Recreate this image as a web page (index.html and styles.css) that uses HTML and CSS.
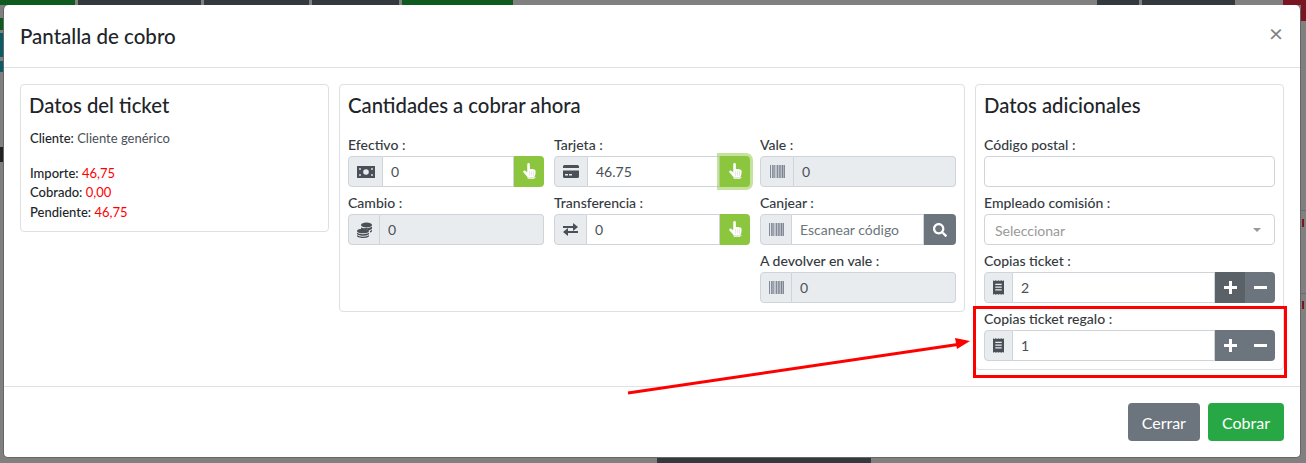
FILE: index.html
```html
<!DOCTYPE html>
<html lang="es">
<head>
<meta charset="utf-8">
<title>Pantalla de cobro</title>
<link rel="stylesheet" href="styles.css">
</head>
<body>
<svg class="defs" width="0" height="0" aria-hidden="true">
  <symbol id="i-hand" viewBox="0 0 16 19">
    <path fill="#fff" d="M5.6 1.4c0-.8.6-1.4 1.4-1.4s1.4.6 1.4 1.4v5.2c.5-.4 1.4-.4 1.9 0 .5-.3 1.4-.3 1.8.2.7-.2 1.9.1 2.2 1.1.3 1 .2 3-.1 4.4-.2 1-.7 1.700-.9 2.500v2H6v-1.800c-.8-1.200-3-3.400-4.300-4.700-.8-.9-.3-2.300.9-2.300.9 0 2.300 1.200 3 1.900z"/>
    <path fill="#d9dcd2" d="M7.700 8.600h.7v4.800h-.7zM9.800 8.600h.7v4.800h-.7zM11.900 8.600h.7v4.800h-.7zM6 15.200h9v.6H6z"/>
  </symbol>
  <symbol id="i-barcode" viewBox="0 0 16 14">
    <path fill="#7b8391" d="M0 0h1v14H0zM2 0h1v14H2zM3.500 0h1.500v14H3.500zM6 0h.8v14H6zM7.500 0h1v14h-1zM9.200 0h1.300v14H9.200zM11 0h.8v14H11zM12.400 0h1.600v14h-1.600zM14.500 0H16v14h-1.500z"/>
  </symbol>
  <symbol id="i-receipt" viewBox="0 0 12 16">
    <path fill="#495057" d="M0 0l1.500 1L3 0l1.500 1L6 0l1.500 1L9 0l1.500 1L12 0v16l-1.500-1L9 16l-1.500-1L6 16l-1.500-1L3 16l-1.500-1L0 16z"/>
    <path fill="#e9ecef" d="M2.500 4h7v1.200h-7zM2.500 7h7v1.200h-7zM2.500 10h7v1.200h-7z"/>
  </symbol>
</svg>

<div class="strip strip-top">
  <span class="s-green s-w75"></span><span class="s-dark s-w122"></span><span class="s-dark s-w105"></span><span class="s-dark s-w87"></span><span class="s-green s-w111"></span><span class="s-gray s-w764">
  </span><span class="s-dark s-w42"></span><span class="s-dark s-w93"></span><span class="s-gray s-w42"></span><span class="s-red s-w28"></span>
</div>
<span class="edge edge-a"></span><span class="edge edge-b"></span><span class="edge edge-c"></span><span class="edge edge-d"></span>
<span class="edge edge-e"></span><span class="edge edge-f"></span><span class="edge edge-g"></span><span class="edge edge-h"></span><span class="edge edge-i"></span>

<main class="modal">
  <header class="modal-header">
    <h5 class="modal-title">Pantalla de cobro</h5>
    <button class="close" type="button">×</button>
  </header>

  <div class="modal-body">
    <section class="card">
      <h4 class="card-title">Datos del ticket</h4>
      <p class="client"><b>Cliente:</b> Cliente genérico</p>
      <p class="totals">
        <b>Importe:</b> <span class="red">46,75</span><br>
        <b>Cobrado:</b> <span class="red">0,00</span><br>
        <b>Pendiente:</b> <span class="red">46,75</span>
      </p>
    </section>

    <section class="card">
      <h4 class="card-title">Cantidades a cobrar ahora</h4>
      <div class="cols">
        <div class="col">
          <div class="field">
            <label>Efectivo :</label>
            <div class="group">
              <span class="addon a34"><svg class="ico-money" viewBox="0 0 18 12"><path fill="#495057" d="M0 0h18v12H0z"/><circle cx="9" cy="6" r="2.800" fill="#e9ecef"/><circle cx="3" cy="3" r=".9" fill="#e9ecef"/><circle cx="15" cy="3" r=".9" fill="#e9ecef"/><circle cx="3" cy="9" r=".9" fill="#e9ecef"/><circle cx="15" cy="9" r=".9" fill="#e9ecef"/></svg></span>
              <input class="ctl" value="0">
              <button class="btn-green" type="button"><svg class="ico-hand"><use href="#i-hand"/></svg></button>
            </div>
          </div>
          <div class="field">
            <label>Cambio :</label>
            <div class="group">
              <span class="addon a31"><svg class="ico-coins" viewBox="0 0 15 16"><g fill="#495057"><ellipse cx="9.500" cy="3" rx="5.500" ry="2.500"/><path d="M4 5.200c1 .8 3 1.300 5.500.9 2.200.2 4.500-.5 5.500-1.500v1.600c0 1-1.500 1.900-3.500 2.200-1-1-3-1.400-4.500-1.400-1 0-2 0-3 .2z"/><ellipse cx="6" cy="9" rx="6" ry="2.300"/><path d="M0 10.500c1 1.100 3.300 1.700 6 1.700s5-.6 6-1.700v1.300c0 1.100-2.700 2-6 2s-6-.9-6-2z"/><path d="M0 13c1 1.100 3.300 1.700 6 1.700s5-.6 6-1.700v.9c0 1.100-2.700 2-6 2s-6-.9-6-2z"/><path d="M13 9c1.100-.3 2-.8 2-1.400v1.500c0 .7-.9 1.300-2 1.600z"/></g></svg></span>
              <input class="ctl" value="0" disabled>
            </div>
          </div>
        </div>

        <div class="col">
          <div class="field">
            <label>Tarjeta :</label>
            <div class="group">
              <span class="addon a33"><svg class="ico-card" viewBox="0 0 16 13"><path fill="#495057" d="M1.500 0h13A1.500 1.500 0 0 1 16 1.500V3H0V1.500A1.500 1.500 0 0 1 1.500 0zM0 5.500h16v6a1.500 1.500 0 0 1-1.500 1.500h-13A1.500 1.500 0 0 1 0 11.500z"/><path fill="#e9ecef" d="M2 9h3v1.500H2zM6 9h3v1.500H6z"/></svg></span>
              <input class="ctl" value="46.75">
              <button class="btn-green is-focus" type="button"><svg class="ico-hand"><use href="#i-hand"/></svg></button>
            </div>
          </div>
          <div class="field">
            <label>Transferencia :</label>
            <div class="group">
              <span class="addon a32"><svg class="ico-exchange" viewBox="0 0 15 13"><path fill="none" stroke="#495057" stroke-width="1.800" d="M0 4h12M15 9H3"/><path fill="#495057" d="M10 0l5 4-5 4zM5 5l-5 4 5 4z"/></svg></span>
              <input class="ctl" value="0">
              <button class="btn-green" type="button"><svg class="ico-hand"><use href="#i-hand"/></svg></button>
            </div>
          </div>
        </div>

        <div class="col">
          <div class="field">
            <label>Vale :</label>
            <div class="group">
              <span class="addon a33"><svg class="ico-barcode"><use href="#i-barcode"/></svg></span>
              <input class="ctl" value="0" disabled>
            </div>
          </div>
          <div class="field">
            <label>Canjear :</label>
            <div class="group">
              <span class="addon a31"><svg class="ico-barcode"><use href="#i-barcode"/></svg></span>
              <input class="ctl" placeholder="Escanear código">
              <button class="btn-gray w32" type="button"><svg class="ico-search" viewBox="0 0 512 512"><path fill="#fff" d="M505 442.700L405.300 343c-4.500-4.500-10.600-7-17-7H372c27.600-35.300 44-79.700 44-128C416 93.100 322.900 0 208 0S0 93.100 0 208s93.100 208 208 208c48.300 0 92.700-16.400 128-44v16.300c0 6.400 2.500 12.500 7 17l99.700 99.700c9.400 9.400 24.600 9.400 33.900 0l28.300-28.300c9.400-9.400 9.400-24.600.1-34zM208 336c-70.700 0-128-57.200-128-128 0-70.700 57.200-128 128-128 70.700 0 128 57.200 128 128 0 70.700-57.200 128-128 128z"/></svg></button>
            </div>
          </div>
          <div class="field">
            <label>A devolver en vale :</label>
            <div class="group">
              <span class="addon a31"><svg class="ico-barcode"><use href="#i-barcode"/></svg></span>
              <input class="ctl" value="0" disabled>
            </div>
          </div>
        </div>
      </div>
    </section>

    <section class="card">
      <h4 class="card-title">Datos adicionales</h4>
      <div class="field">
        <label>Código postal :</label>
        <div class="group"><input class="ctl solo"></div>
      </div>
      <div class="field">
        <label>Empleado comisión :</label>
        <div class="group select-box"><span>Seleccionar</span><i class="caret"></i></div>
      </div>
      <div class="field">
        <label>Copias ticket :</label>
        <div class="group">
          <span class="addon a28"><svg class="ico-receipt"><use href="#i-receipt"/></svg></span>
          <input class="ctl" value="2">
          <button class="btn-gray w30 is-hover" type="button"><span class="plus"></span></button>
          <button class="btn-gray w30" type="button"><span class="minus"></span></button>
        </div>
      </div>
      <div class="field">
        <label>Copias ticket regalo :</label>
        <div class="group">
          <span class="addon a28"><svg class="ico-receipt"><use href="#i-receipt"/></svg></span>
          <input class="ctl" value="1">
          <button class="btn-gray w30" type="button"><span class="plus"></span></button>
          <button class="btn-gray w30" type="button"><span class="minus"></span></button>
        </div>
      </div>
    </section>
  </div>

  <footer class="modal-footer">
    <button class="btn btn-secondary" type="button">Cerrar</button>
    <button class="btn btn-success" type="button">Cobrar</button>
  </footer>
</main>

<div class="strip strip-bottom"><span class="s-bottom"></span></div>

<div class="highlight"></div>
<svg class="arrow" viewBox="0 0 350 60" width="350" height="60">
  <path d="M2 56L335 7" fill="none" stroke="#f00" stroke-width="3"/>
  <path d="M344 4L329 1l2 11z" fill="#f00"/>
</svg>
</body>
</html>
```

FILE: styles.css
```css
* { box-sizing: border-box; }

html, body { height: 463px; }

body {
  position: relative;
  margin: 0;
  overflow: hidden;
  background: #808080;
  color: #212529;
  font-family: Lato, "Noto Sans", sans-serif;
  font-size: 14px;
  line-height: 1.5;
}

.defs { position: absolute; }

/* dimmed page behind the dialog */
.strip { display: flex; height: 5px; }
.strip-top { gap: 3px; }
.strip-top span { display: block; height: 5px; flex: none; }
.s-green { background: #0f5a1e; }
.s-dark { background: #34393d; }
.s-gray { background: #808080; }
.s-red { background: #7a1522; }
.s-w75 { width: 75px; }
.s-w122 { width: 123px; }
.s-w105 { width: 105px; }
.s-w87 { width: 87px; }
.s-w111 { width: 111px; }
.s-w764 { width: 578px; }
.s-w42 { width: 42px; }
.s-w93 { width: 93px; }
.s-w28 { width: 33px; }
.strip-bottom { padding-left: 657px; }
.s-bottom { display: block; width: 214px; height: 5px; background: #34393d; }

.edge { position: absolute; display: block; }
.edge-a { left: 0; top: 18px; width: 3px; height: 12px; background: #0f5a1e; }
.edge-b { left: 0; top: 33px; width: 3px; height: 24px; background: #0b5c66; }
.edge-c { left: 0; top: 61px; width: 3px; height: 11px; background: #0b5c66; }
.edge-d { left: 0; top: 147px; width: 3px; height: 15px; background: #222; }
.edge-e { right: 0; top: 210px; width: 5px; height: 1px; background: #6b6b6b; }
.edge-f { right: 0; top: 293px; width: 5px; height: 1px; background: #6b6b6b; }
.edge-g { right: 0; top: 5px; width: 5px; height: 16px; background: #7a1522; }
.edge-h { right: 2px; top: 219px; width: 2px; height: 8px; background: #7a1522; }
.edge-i { right: 2px; top: 301px; width: 2px; height: 8px; background: #7a1522; }

/* dialog */
.modal {
  width: 1298px;
  margin-left: 3px;
  background: #fff;
  background-clip: padding-box;
  border: 1px solid rgba(0, 0, 0, .2);
  border-top-width: 0;
  border-radius: 5px;
}

.modal-header {
  display: flex;
  align-items: center;
  justify-content: space-between;
  height: 63px;
  padding: 0 16px;
  border-bottom: 1px solid #dee2e6;
}

.modal-title {
  margin: 0;
  color: #212529;
  font-size: 20.5px;
  font-weight: 500;
  line-height: 1.5;
}

.close {
  padding: 0;
  margin: 0 1px 6px 0;
  border: 0;
  background: none;
  color: #808080;
  font: 400 24px/1 Lato, sans-serif;
}

.modal-body {
  display: grid;
  grid-template-columns: 309px 626px 309px;
  gap: 10px;
  align-items: start;
  padding: 16px;
}

.card {
  padding: 8px;
  border: 1px solid #dfdfdf;
  border-radius: 4px;
}

.card-title {
  height: 36px;
  margin: 0;
  color: #212529;
  font-size: 20.3px;
  font-weight: 500;
  line-height: 24px;
}

.client, .totals { margin: 0 0 0 1px; font-size: 13px; line-height: 19.5px; color: #495057; }
.client { margin-bottom: 15px; }
.totals { margin-bottom: 1px; color: #343a40; }
b { font-weight: 500; color: #212529; }
.red { color: #f00; }

.cols {
  display: grid;
  grid-template-columns: repeat(3, minmax(0, 1fr));
  column-gap: 10px;
}

.field { height: 58px; padding-top: 6px; }
.field label { display: block; height: 21px; font-weight: 500; line-height: 19px; color: #343a40; }

.group { display: flex; height: 31px; }

.addon {
  display: flex;
  flex: none;
  align-items: center;
  justify-content: center;
  background: #e9ecef;
  border: 1px solid #ced4da;
  border-radius: 4px 0 0 4px;
}
.a28 { width: 29px; }
.a31 { width: 32px; }
.a32 { width: 33px; }
.a33 { width: 34px; }
.a34 { width: 35px; }

.ctl {
  flex: 1;
  min-width: 0;
  padding: 0 8px;
  background: #fff;
  border: 1px solid #ced4da;
  border-left: 0;
  color: #495057;
  font: 14px Lato, sans-serif;
  outline: 0;
}
.ctl:last-child { border-radius: 0 4px 4px 0; }
.ctl:disabled { background: #e9ecef; }
.ctl::placeholder { color: #6c757d; opacity: 1; }
.ctl.solo { border-left: 1px solid #ced4da; border-radius: 4px; }

.select-box {
  align-items: center;
  justify-content: space-between;
  padding: 1px 13px 0 10px;
  border: 1px solid #ced4da;
  border-radius: 4px;
  color: #999;
  line-height: 29px;
}

.caret {
  width: 0;
  height: 0;
  border-top: 4px solid #999;
  border-left: 4px solid transparent;
  border-right: 4px solid transparent;
}

.btn-green, .btn-gray {
  display: flex;
  flex: none;
  align-items: center;
  justify-content: center;
  padding: 0;
  border: 0;
}

.btn-green {
  width: 30px;
  background: #8cc63f;
  border-radius: 0 4px 4px 0;
}
.btn-green.is-focus { box-shadow: 0 0 0 3px rgba(140, 198, 63, .5); }

.btn-gray { background: #6c757d; }
.btn-gray:last-child { border-radius: 0 4px 4px 0; }
.btn-gray.is-hover { background: #5a6268; }
.w30 { width: 30px; }
.w32 { width: 32px; }

.plus, .minus { position: relative; display: block; width: 13px; height: 13px; }
.plus::before, .minus::before {
  content: "";
  position: absolute;
  left: 0;
  top: 5px;
  width: 13px;
  height: 3px;
  background: #fff;
}
.plus::after {
  content: "";
  position: absolute;
  left: 5px;
  top: 0;
  width: 3px;
  height: 13px;
  background: #fff;
}

.ico-hand { width: 15px; height: 18px; }
.ico-money { width: 18px; height: 12px; }
.ico-coins { width: 15px; height: 16px; }
.ico-card { width: 16px; height: 13px; }
.ico-exchange { width: 15px; height: 13px; }
.ico-barcode { width: 15px; height: 13px; }
.ico-search { width: 14px; height: 14px; }
.ico-receipt { width: 11px; height: 15px; }

.modal-footer {
  display: flex;
  justify-content: flex-end;
  gap: 8px;
  padding: 16px;
  border-top: 1px solid #dee2e6;
}

.btn {
  height: 38px;
  padding: 0 14px;
  border: 0;
  border-radius: 4px;
  color: #fff;
  font: 16px Lato, sans-serif;
}
.btn-secondary { background: #6c757d; }
.btn-success { background: #28a745; }

/* annotation drawn over the screenshot */
.highlight {
  position: absolute;
  left: 973px;
  top: 306px;
  width: 314px;
  height: 72px;
  border: 3px solid #f00;
}

.arrow {
  position: absolute;
  left: 626px;
  top: 337px;
}
```
